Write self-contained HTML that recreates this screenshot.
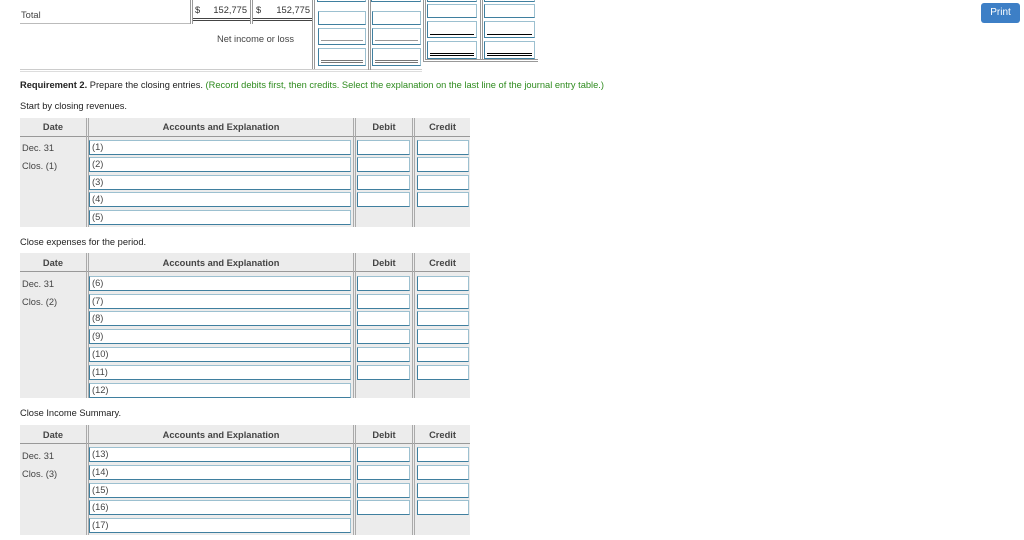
<!DOCTYPE html>
<html><head><meta charset="utf-8"><style>
body{margin:0;width:1024px;height:540px;background:#fff;position:relative;overflow:hidden;font-family:"Liberation Sans",Arial,sans-serif;font-size:9.3px;color:#222}
.a{position:absolute}
.in{position:absolute;height:13px;background:#fff;border:1px solid #3f7f9f;border-top-color:#9cc0d0;border-right-color:#9cc0d0;box-sizing:content-box;font-size:9.3px;color:#444;line-height:13px;padding-left:2px}
.g{position:absolute;background:#ececec}
.h{position:absolute;font-weight:bold;color:#444;text-align:center;font-size:9.3px}
.vl{position:absolute;width:1px;background:#999}
.hl{position:absolute;height:1px;background:#999}
.t{position:absolute;font-size:9.3px;color:#444;white-space:nowrap}
</style></head><body>
<div class="t" style="left:21px;top:10px">Total</div>
<div class="hl" style="left:20px;top:23px;width:170px;background:#bbb"></div>
<div class="vl" style="left:190px;top:0;height:24px"></div>
<div class="vl" style="left:192px;top:0;height:24px"></div>
<div class="t" style="left:195px;top:5px;color:#333">$</div>
<div class="t" style="left:200px;top:5px;width:47px;text-align:right;color:#333">152,775</div>
<div class="vl" style="left:250px;top:0;height:24px"></div>
<div class="vl" style="left:252px;top:0;height:24px"></div>
<div class="t" style="left:256px;top:5px;color:#333">$</div>
<div class="t" style="left:262px;top:5px;width:48px;text-align:right;color:#333">152,775</div>
<div class="hl" style="left:193px;top:18px;width:57px;background:#444"></div>
<div class="hl" style="left:193px;top:20px;width:57px;background:#444"></div>
<div class="hl" style="left:253px;top:18px;width:59px;background:#444"></div>
<div class="hl" style="left:253px;top:20px;width:59px;background:#444"></div>
<div class="vl" style="left:312px;top:0;height:70px"></div>
<div class="vl" style="left:314px;top:0;height:70px"></div>
<div class="t" style="left:217px;top:34px">Net income or loss</div>
<div class="hl" style="left:20px;top:69px;width:402px;background:#ccc"></div>
<div class="hl" style="left:20px;top:71px;width:402px;background:#ddd"></div>
<div class="in" style="left:317px;top:-4px;width:47px;height:4px;padding:0"></div>
<div class="in" style="left:371px;top:-4px;width:48px;height:4px;padding:0"></div>
<div class="in" style="left:318px;top:11px;width:46px;height:12px;padding:0"></div>
<div class="in" style="left:372px;top:11px;width:47px;height:12px;padding:0"></div>
<div class="in" style="left:318px;top:28px;width:46px;height:15px;padding:0"></div>
<div class="in" style="left:372px;top:28px;width:47px;height:15px;padding:0"></div>
<div class="hl" style="left:321px;top:40px;width:42px;background:#999"></div>
<div class="hl" style="left:375px;top:40px;width:43px;background:#999"></div>
<div class="in" style="left:318px;top:48px;width:46px;height:16px;padding:0"></div>
<div class="in" style="left:372px;top:48px;width:47px;height:16px;padding:0"></div>
<div class="hl" style="left:321px;top:60px;width:42px;background:#777"></div>
<div class="hl" style="left:321px;top:62px;width:42px;background:#777"></div>
<div class="hl" style="left:375px;top:60px;width:43px;background:#777"></div>
<div class="hl" style="left:375px;top:62px;width:43px;background:#777"></div>
<div class="vl" style="left:368px;top:0;height:70px"></div>
<div class="vl" style="left:370px;top:0;height:70px"></div>
<div class="vl" style="left:423px;top:0;height:62px"></div>
<div class="vl" style="left:425px;top:0;height:60px"></div>
<div class="vl" style="left:480px;top:0;height:60px"></div>
<div class="vl" style="left:482px;top:0;height:60px"></div>
<div class="hl" style="left:423px;top:61px;width:115px"></div>
<div class="hl" style="left:425px;top:59px;width:113px"></div>
<div class="in" style="left:427px;top:-4px;width:48px;height:4px;padding:0"></div>
<div class="in" style="left:484px;top:-4px;width:49px;height:4px;padding:0"></div>
<div class="in" style="left:427px;top:4px;width:48px;height:12px;padding:0"></div>
<div class="in" style="left:484px;top:4px;width:49px;height:12px;padding:0"></div>
<div class="in" style="left:427px;top:21px;width:48px;height:15px;padding:0"></div>
<div class="in" style="left:484px;top:21px;width:49px;height:15px;padding:0"></div>
<div class="hl" style="left:430px;top:34px;width:44px;background:#000"></div>
<div class="hl" style="left:487px;top:34px;width:45px;background:#000"></div>
<div class="in" style="left:427px;top:41px;width:48px;height:16px;padding:0"></div>
<div class="in" style="left:484px;top:41px;width:49px;height:16px;padding:0"></div>
<div class="hl" style="left:430px;top:53px;width:44px;background:#000"></div>
<div class="hl" style="left:430px;top:55px;width:44px;background:#000"></div>
<div class="hl" style="left:487px;top:53px;width:45px;background:#000"></div>
<div class="hl" style="left:487px;top:55px;width:45px;background:#000"></div>

<div class="a" style="left:981px;top:3px;width:39px;height:20px;background:#3d7fc6;border-radius:3px;color:#fff;font-size:10px;text-align:center;line-height:20px">Print</div>

<div class="t" style="left:20px;top:80px;color:#222"><b>Requirement 2.</b> Prepare the closing entries. <span style="color:#2e8b1e">(Record debits first, then credits. Select the explanation on the last line of the journal entry table.)</span></div>
<div class="t" style="left:20px;top:101px;color:#222">Start by closing revenues.</div>

<!-- Table 1 -->
<div class="g" style="left:20px;top:118px;width:450px;height:109px"></div>
<div class="hl" style="left:20px;top:136px;width:450px;background:#999"></div>
<div class="vl" style="left:86px;top:118px;height:109px;background:#aaa"></div><div class="vl" style="left:88px;top:118px;height:109px;background:#aaa"></div>
<div class="vl" style="left:353px;top:118px;height:109px;background:#aaa"></div><div class="vl" style="left:355px;top:118px;height:109px;background:#aaa"></div>
<div class="vl" style="left:412px;top:118px;height:109px;background:#aaa"></div><div class="vl" style="left:414px;top:118px;height:109px;background:#aaa"></div>
<div class="h" style="left:20px;top:122px;width:66px">Date</div>
<div class="h" style="left:89px;top:122px;width:264px">Accounts and Explanation</div>
<div class="h" style="left:356px;top:122px;width:56px">Debit</div>
<div class="h" style="left:415px;top:122px;width:55px">Credit</div>
<div class="t" style="left:22px;top:143px">Dec. 31</div>
<div class="t" style="left:22px;top:161px">Clos. (1)</div>
<div class="in" style="left:89px;top:140px;width:258px">(1)</div>
<div class="in" style="left:89px;top:157px;width:258px">(2)</div>
<div class="in" style="left:89px;top:175px;width:258px">(3)</div>
<div class="in" style="left:89px;top:192px;width:258px">(4)</div>
<div class="in" style="left:89px;top:210px;width:258px">(5)</div>
<div class="in" style="left:357px;top:140px;width:51px;padding:0"></div><div class="in" style="left:417px;top:140px;width:50px;padding:0"></div>
<div class="in" style="left:357px;top:157px;width:51px;padding:0"></div><div class="in" style="left:417px;top:157px;width:50px;padding:0"></div>
<div class="in" style="left:357px;top:175px;width:51px;padding:0"></div><div class="in" style="left:417px;top:175px;width:50px;padding:0"></div>
<div class="in" style="left:357px;top:192px;width:51px;padding:0"></div><div class="in" style="left:417px;top:192px;width:50px;padding:0"></div>

<div class="t" style="left:20px;top:237px;color:#222">Close expenses for the period.</div>

<!-- Table 2 -->
<div class="g" style="left:20px;top:253px;width:450px;height:145px"></div>
<div class="hl" style="left:20px;top:271px;width:450px;background:#999"></div>
<div class="vl" style="left:86px;top:253px;height:145px;background:#aaa"></div><div class="vl" style="left:88px;top:253px;height:145px;background:#aaa"></div>
<div class="vl" style="left:353px;top:253px;height:145px;background:#aaa"></div><div class="vl" style="left:355px;top:253px;height:145px;background:#aaa"></div>
<div class="vl" style="left:412px;top:253px;height:145px;background:#aaa"></div><div class="vl" style="left:414px;top:253px;height:145px;background:#aaa"></div>
<div class="h" style="left:20px;top:258px;width:66px">Date</div>
<div class="h" style="left:89px;top:258px;width:264px">Accounts and Explanation</div>
<div class="h" style="left:356px;top:258px;width:56px">Debit</div>
<div class="h" style="left:415px;top:258px;width:55px">Credit</div>
<div class="t" style="left:22px;top:279px">Dec. 31</div>
<div class="t" style="left:22px;top:297px">Clos. (2)</div>
<div class="in" style="left:89px;top:276px;width:258px">(6)</div>
<div class="in" style="left:89px;top:294px;width:258px">(7)</div>
<div class="in" style="left:89px;top:311px;width:258px">(8)</div>
<div class="in" style="left:89px;top:329px;width:258px">(9)</div>
<div class="in" style="left:89px;top:347px;width:258px">(10)</div>
<div class="in" style="left:89px;top:365px;width:258px">(11)</div>
<div class="in" style="left:89px;top:383px;width:258px">(12)</div>
<div class="in" style="left:357px;top:276px;width:51px;padding:0"></div><div class="in" style="left:417px;top:276px;width:50px;padding:0"></div>
<div class="in" style="left:357px;top:294px;width:51px;padding:0"></div><div class="in" style="left:417px;top:294px;width:50px;padding:0"></div>
<div class="in" style="left:357px;top:311px;width:51px;padding:0"></div><div class="in" style="left:417px;top:311px;width:50px;padding:0"></div>
<div class="in" style="left:357px;top:329px;width:51px;padding:0"></div><div class="in" style="left:417px;top:329px;width:50px;padding:0"></div>
<div class="in" style="left:357px;top:347px;width:51px;padding:0"></div><div class="in" style="left:417px;top:347px;width:50px;padding:0"></div>
<div class="in" style="left:357px;top:365px;width:51px;padding:0"></div><div class="in" style="left:417px;top:365px;width:50px;padding:0"></div>

<div class="t" style="left:20px;top:408px;color:#222">Close Income Summary.</div>

<!-- Table 3 -->
<div class="g" style="left:20px;top:425px;width:450px;height:110px"></div>
<div class="hl" style="left:20px;top:443px;width:450px;background:#999"></div>
<div class="vl" style="left:86px;top:425px;height:110px;background:#aaa"></div><div class="vl" style="left:88px;top:425px;height:110px;background:#aaa"></div>
<div class="vl" style="left:353px;top:425px;height:110px;background:#aaa"></div><div class="vl" style="left:355px;top:425px;height:110px;background:#aaa"></div>
<div class="vl" style="left:412px;top:425px;height:110px;background:#aaa"></div><div class="vl" style="left:414px;top:425px;height:110px;background:#aaa"></div>
<div class="h" style="left:20px;top:430px;width:66px">Date</div>
<div class="h" style="left:89px;top:430px;width:264px">Accounts and Explanation</div>
<div class="h" style="left:356px;top:430px;width:56px">Debit</div>
<div class="h" style="left:415px;top:430px;width:55px">Credit</div>
<div class="t" style="left:22px;top:451px">Dec. 31</div>
<div class="t" style="left:22px;top:469px">Clos. (3)</div>
<div class="in" style="left:89px;top:447px;width:258px">(13)</div>
<div class="in" style="left:89px;top:465px;width:258px">(14)</div>
<div class="in" style="left:89px;top:483px;width:258px">(15)</div>
<div class="in" style="left:89px;top:500px;width:258px">(16)</div>
<div class="in" style="left:89px;top:518px;width:258px">(17)</div>
<div class="in" style="left:357px;top:447px;width:51px;padding:0"></div><div class="in" style="left:417px;top:447px;width:50px;padding:0"></div>
<div class="in" style="left:357px;top:465px;width:51px;padding:0"></div><div class="in" style="left:417px;top:465px;width:50px;padding:0"></div>
<div class="in" style="left:357px;top:483px;width:51px;padding:0"></div><div class="in" style="left:417px;top:483px;width:50px;padding:0"></div>
<div class="in" style="left:357px;top:500px;width:51px;padding:0"></div><div class="in" style="left:417px;top:500px;width:50px;padding:0"></div>
</body></html>
